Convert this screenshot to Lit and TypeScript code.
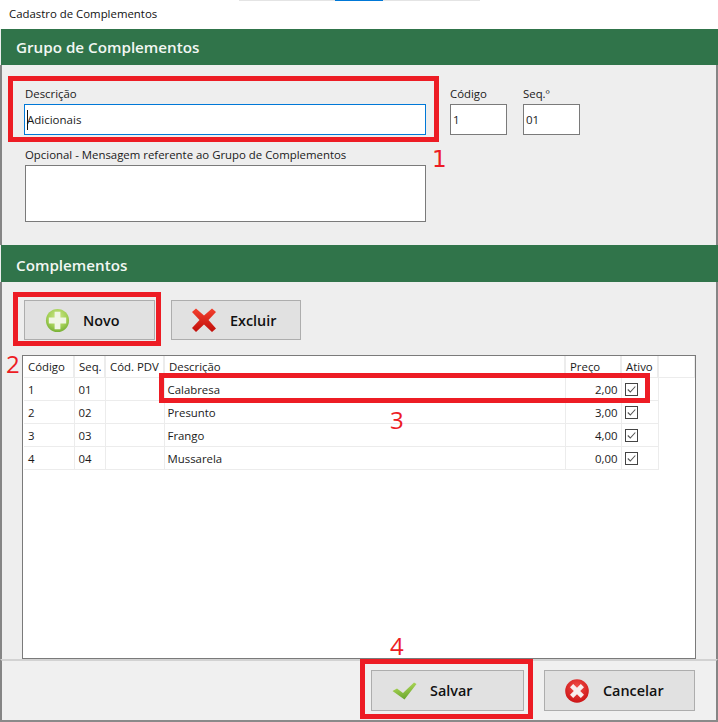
import { LitElement, html, css, svg } from "lit";
import { customElement } from "lit/decorators.js";

const rows = [
  ["1", "01", "", "Calabresa", "2,00"],
  ["2", "02", "", "Presunto", "3,00"],
  ["3", "03", "", "Frango", "4,00"],
  ["4", "04", "", "Mussarela", "0,00"],
];

const plusIcon = svg`<svg class="ico" width="25" height="25" viewBox="0 0 26 26">
  <defs><radialGradient id="pg" cx="50%" cy="35%" r="70%"><stop offset="0" stop-color="#cfe88c"/><stop offset="0.6" stop-color="#a2cf55"/><stop offset="1" stop-color="#6faa30"/></radialGradient></defs>
  <circle cx="13" cy="13" r="12" fill="url(#pg)"/>
  <path d="M10 4h6v6h6v6h-6v6h-6v-6H4v-6h6z" fill="#f0f6e4"/>
</svg>`;

const crossIcon = svg`<svg class="ico" width="26" height="26" viewBox="0 0 26 26">
  <defs><linearGradient id="xg" x1="0" y1="0" x2="0" y2="1"><stop offset="0" stop-color="#f4402e"/><stop offset="1" stop-color="#c00e0a"/></linearGradient></defs>
  <path d="M5 1.500 13 8.500 21 1.500 25 5 17.500 13 25 21.500 21 25 13 17.500 5 25 1 21 8.500 13 1 5z" fill="url(#xg)"/>
</svg>`;

const checkIcon = svg`<svg class="ico" width="25" height="18" viewBox="0 0 25 18">
  <defs><linearGradient id="cg" x1="0.200" y1="0" x2="0.500" y2="1"><stop offset="0" stop-color="#b9e05e"/><stop offset="1" stop-color="#67a42c"/></linearGradient></defs>
  <path d="M0.500 9 5 6.500 11 11 22 0.500 24.500 2 12.500 17.500z" fill="url(#cg)"/>
</svg>`;

const cancelIcon = svg`<svg class="ico" width="24" height="24" viewBox="0 0 24 24">
  <defs><radialGradient id="rg" cx="50%" cy="35%" r="70%"><stop offset="0" stop-color="#f4504a"/><stop offset="1" stop-color="#c80f12"/></radialGradient></defs>
  <circle cx="12" cy="12" r="11.800" fill="url(#rg)"/>
  <path d="M8.200 5 12 8.800 15.800 5 19 8.200 15.200 12 19 15.800 15.800 19 12 15.200 8.200 19 5 15.800 8.800 12 5 8.200z" fill="#f8eeee"/>
</svg>`;

const boxCheck = svg`<svg class="cb" width="13" height="13" viewBox="0 0 13 13">
  <rect x="0.500" y="0.500" width="12" height="12" fill="#fff" stroke="#444"/>
  <path d="M2.800 6.500 5.300 9 10.300 3.500" fill="none" stroke="#555" stroke-width="1.100"/>
</svg>`;

@customElement("app-root")
export class AppRoot extends LitElement {
  static styles = css`
    :host {
      display: block;
      width: 718px;
      height: 722px;
      font-family: "Open Sans", "Noto Sans", "Liberation Sans", sans-serif;
      font-size: 11.4px;
      color: #1a1a1a;
    }
    * { box-sizing: border-box; }
    .window {
      position: relative;
      width: 718px;
      height: 722px;
      display: flex;
      flex-direction: column;
      background: #eeeeee;
      border-bottom: 2px solid #8a8a8a;
      overflow: hidden;
    }
    .title {
      height: 29px;
      flex: none;
      background: #fff;
      padding: 6px 0 0 9px;
      font-size: 11.400px;
      line-height: 16px;
      color: #111;
    }
    .strip {
      position: absolute;
      top: 0;
      left: 239px;
      width: 241px;
      height: 1px;
      background: #e4e4e4;
    }
    .strip i {
      display: block;
      margin-left: 96px;
      width: 48px;
      height: 1px;
      background: #0078d7;
    }
    .band {
      flex: none;
      margin-left: 1px;
      background: #30744a;
      color: #f2f7f3;
      font-size: 15.200px;
      font-weight: 600;
      padding-left: 15px;
      display: flex;
      align-items: center;
    }
    .band.a { height: 36px; }
    .band.b { height: 37px; padding-top: 3px; }
    .side {
      flex: none;
      border-left: 2px solid #858585;
      border-right: 2px solid #858585;
      display: flex;
    }
    .form {
      height: 180px;
      padding: 21px 0 0 22px;
      gap: 24px;
    }
    .field { display: flex; flex-direction: column; }
    .lbl { height: 18px; line-height: 15px; padding-left: 1px; white-space: nowrap; }
    .sm-wrap .lbl { padding-left: 0; }
    .input {
      background: #fff;
      border: 1px solid #7a7a7a;
      height: 31px;
      line-height: 29px;
      padding-left: 2px;
      font-size: 11.500px;
      position: relative;
    }
    .input.focus { border-color: #0078d7; }
    .input.focus::before {
      content: "";
      position: absolute;
      left: 2px;
      top: 5px;
      width: 1px;
      height: 20px;
      background: #111;
    }
    .w-desc { width: 402px; }
    .w-sm { width: 57px; padding-left: 0; }
    .w-sm .txt { padding-left: 2px; }
    .gap-l { margin-top: 12px; }
    .text {
      height: 57px;
      width: 401px;
      margin-left: 1px;
      background: #fff;
      border: 1px solid #7a7a7a;
    }
    .sm-wrap { display: flex; gap: 16px; }
    .list {
      flex: 1;
      min-height: 0;
      flex-direction: column;
      padding: 18px 20px 0 20px;
    }
    .btns { display: flex; gap: 16px; padding-left: 2px; flex: none; }
    .btn {
      display: flex;
      align-items: center;
      height: 40px;
      background: #e1e1e1;
      border: 1px solid #adadad;
      font-weight: 600;
      font-size: 14.400px;
      line-height: 20px;
      color: #111;
    }
    .btn span { padding-top: 1px; }
    .btn .ico { flex: none; }
    .btn.small { width: 131px; }
    .btn.novo { padding-left: 20px; gap: 13px; }
    .btn.excl { padding-left: 19px; gap: 13px; width: 130px; }
    .grid {
      margin-top: 15px;
      flex: 1;
      background: #fff;
      border: 1px solid #7a7a7a;
      overflow: hidden;
    }
    table {
      border-collapse: collapse;
      table-layout: fixed;
      width: 670px;
      margin-left: 1px;
    }
    th, td {
      font-weight: 400;
      padding: 0 0 0 4px;
      text-align: left;
      white-space: nowrap;
      overflow: hidden;
      border-right: 1px solid #ececec;
      border-bottom: 1px solid #ececec;
      height: 23px;
    }
    th { height: 21px; border-right-width: 2px; line-height: 21px; }
    td { line-height: 20px; padding-top: 2px; }
    td:nth-child(4) { padding-left: 3px; }
    td.num { text-align: right; padding: 2px 3px 0 0; }
    td.chk { padding: 0 0 0 3px; line-height: 0; }
    .cb { display: block; }
    th.fill { border-right-width: 1px; }
    .c1 { width: 50px; } .c2 { width: 31px; } .c3 { width: 59px; }
    .c4 { width: 401px; } .c5 { width: 56px; } .c6 { width: 37px; } .c7 { width: 36px; }
    .foot {
      flex: none;
      height: 61px;
      background: #f0f0f0;
      border-top: 2px solid #d2d2d2;
      padding: 9px 21px 0 0;
      justify-content: flex-end;
      gap: 20px;
    }
    .btn.save { width: 153px; height: 41px; padding-left: 20px; gap: 13px; }
    .btn.cancel { width: 151px; height: 41px; padding-left: 20px; gap: 14px; }
    .mark { position: absolute; border: 5px solid #ed1c24; pointer-events: none; }
    .m1 { left: 8px; top: 76px; width: 431px; height: 66px; }
    .m2 { left: 13px; top: 292px; width: 148px; height: 54px; }
    .m3 { left: 159px; top: 373px; width: 491px; height: 30px; }
    .m4 { left: 360px; top: 659px; width: 173px; height: 60px; }
    .num-mark {
      position: absolute;
      color: #ed1c24;
      font-size: 24px;
      line-height: 28px;
      font-family: "Open Sans", sans-serif;
    }
    .n1 { left: 432px; top: 145px; font-family: "DejaVu Sans", sans-serif; font-size: 23px; }
    .n2 { left: 6px; top: 350px; }
    .n3 { left: 390px; top: 406px; }
    .n4 { left: 390px; top: 632px; }
  `;

  render() {
    return html`
      <div class="window">
        <div class="strip"><i></i></div>
        <div class="title">Cadastro de Complementos</div>
        <div class="band a">Grupo de Complementos</div>
        <div class="side form">
          <div class="field w-desc">
            <div class="lbl">Descrição</div>
            <div class="input focus">Adicionais</div>
            <div class="lbl gap-l">Opcional - Mensagem referente ao Grupo de Complementos</div>
            <div class="text"></div>
          </div>
          <div class="sm-wrap">
            <div class="field">
              <div class="lbl">Código</div>
              <div class="input w-sm"><span class="txt">1</span></div>
            </div>
            <div class="field">
              <div class="lbl">Seq.º</div>
              <div class="input w-sm"><span class="txt">01</span></div>
            </div>
          </div>
        </div>
        <div class="band b">Complementos</div>
        <div class="side list">
          <div class="btns">
            <div class="btn small novo">${plusIcon}<span>Novo</span></div>
            <div class="btn excl">${crossIcon}<span>Excluir</span></div>
          </div>
          <div class="grid">
            <table>
              <colgroup>
                <col class="c1" /><col class="c2" /><col class="c3" /><col class="c4" />
                <col class="c5" /><col class="c6" /><col class="c7" />
              </colgroup>
              <thead>
                <tr>
                  <th>Código</th><th>Seq.</th><th>Cód. PDV</th><th>Descrição</th>
                  <th>Preço</th><th>Ativo</th><th class="fill"></th>
                </tr>
              </thead>
              <tbody>
                ${rows.map(
                  (r) => html`<tr>
                    <td>${r[0]}</td><td>${r[1]}</td><td>${r[2]}</td><td>${r[3]}</td>
                    <td class="num">${r[4]}</td><td class="chk">${boxCheck}</td>
                  </tr>`
                )}
              </tbody>
            </table>
          </div>
        </div>
        <div class="side foot">
          <div class="btn save">${checkIcon}<span>Salvar</span></div>
          <div class="btn cancel">${cancelIcon}<span>Cancelar</span></div>
        </div>
        <div class="mark m1"></div>
        <div class="mark m2"></div>
        <div class="mark m3"></div>
        <div class="mark m4"></div>
        <div class="num-mark n1">1</div>
        <div class="num-mark n2">2</div>
        <div class="num-mark n3">3</div>
        <div class="num-mark n4">4</div>
      </div>
    `;
  }
}
